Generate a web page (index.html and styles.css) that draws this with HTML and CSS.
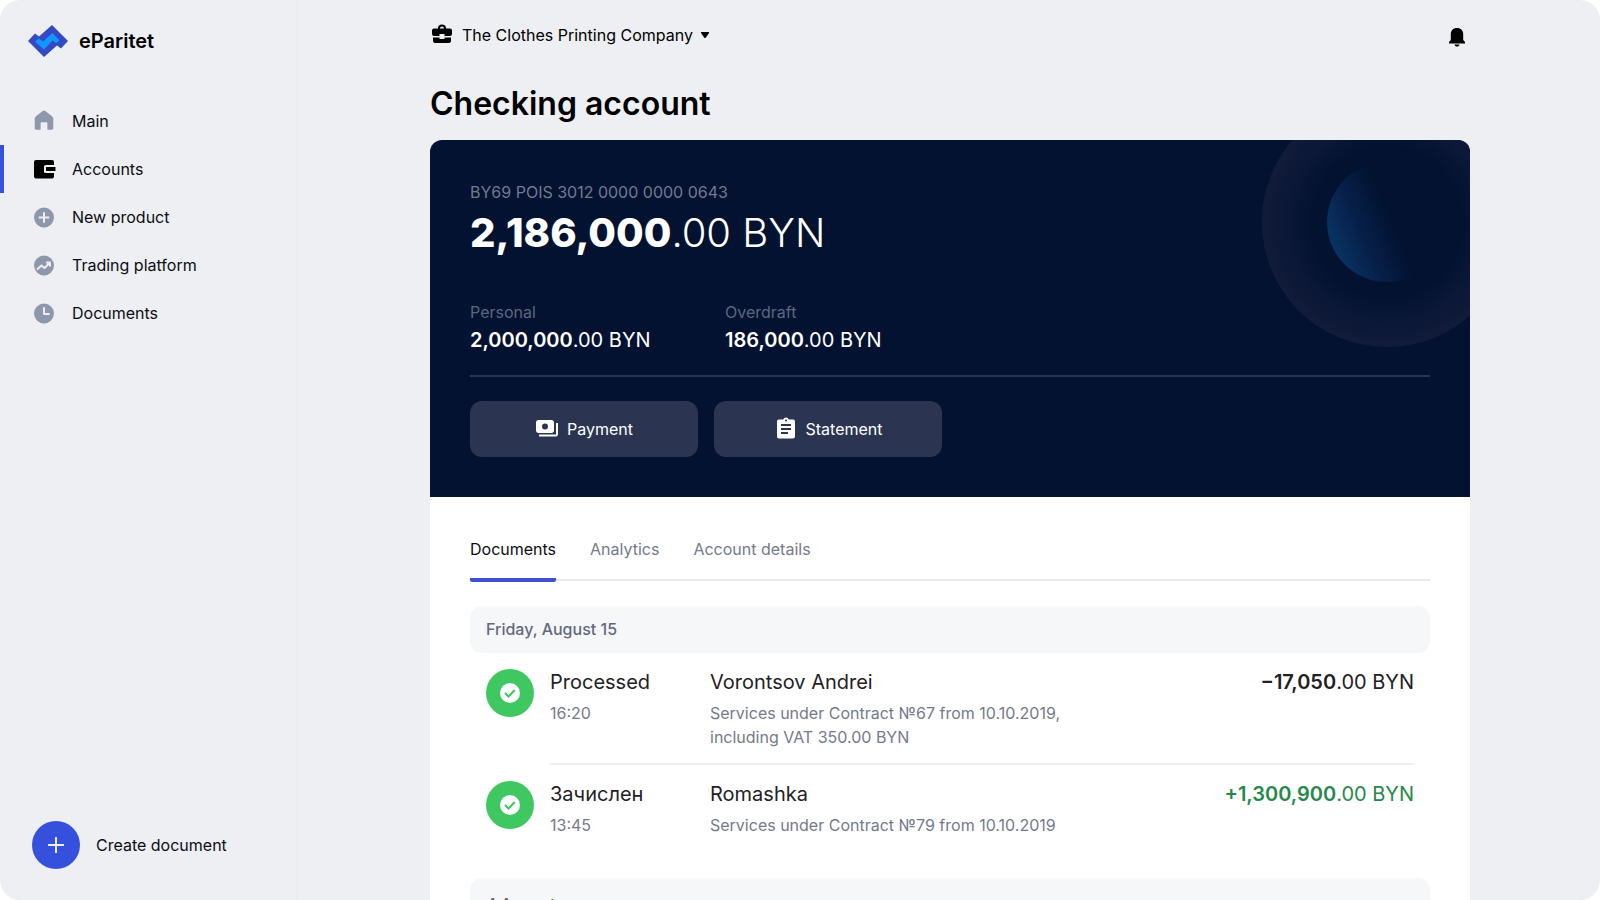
FILE: index.html
```html
<!DOCTYPE html>
<html lang="en">
<head>
<meta charset="utf-8">
<meta name="viewport" content="width=device-width, initial-scale=1">
<title>eParitet – Checking account</title>
<link rel="stylesheet" href="styles.css">
</head>
<body>
<div class="app">
  <aside class="sidebar">
    <a class="brand" href="#">
      <svg class="brand-mark" viewBox="0 0 40 32" aria-hidden="true">
        <path fill="#3449c4" d="M0 16 7 8.500l4 3L24 0l16 16-7 7.500-4-3L16 32z"/>
        <path fill="#1296ff" d="M7 16.500 11 13.500l4 3L24.500 8l7 7.500-3.500 2.500-3.500-2.500L16 24.500z"/>
      </svg>
      <span>eParitet</span>
    </a>
    <nav class="menu" aria-label="Primary">
      <a class="menu-item" href="#"><svg viewBox="0 0 24 24" aria-hidden="true"><path d="M12 1.500c.5 0 .9.2 1.300.5l7 5.500c.6.5 1 1.200 1 2V19c0 1-.7 1.700-1.700 1.700h-4.200v-6.200c0-.7-.5-1.200-1.200-1.200h-4.400c-.7 0-1.200.5-1.200 1.200v6.200H4.400c-1 0-1.700-.7-1.700-1.700V9.500c0-.8.4-1.500 1-2l7-5.500c.4-.3.800-.5 1.300-.5z"/></svg>Main</a>
      <a class="menu-item is-current" href="#" aria-current="page"><svg viewBox="0 0 24 24" aria-hidden="true"><rect x="2" y="3" width="20" height="18.500" rx="2"/><rect class="gap" x="12" y="8" width="13" height="8" rx="1.500"/><rect x="14" y="10" width="9.500" height="4" rx=".5"/></svg>Accounts</a>
      <a class="menu-item" href="#"><svg viewBox="0 0 24 24" aria-hidden="true"><circle cx="12" cy="12.500" r="10"/><path class="cut" d="M12 8v9M7.500 12.500h9"/></svg>New product</a>
      <a class="menu-item" href="#"><svg viewBox="0 0 24 24" aria-hidden="true"><circle cx="12" cy="12.500" r="10"/><path class="cut" d="M5.500 16 9.500 12.500l3 2.500 5-5M14.800 9.500h3.200v3.200"/></svg>Trading platform</a>
      <a class="menu-item" href="#"><svg viewBox="0 0 24 24" aria-hidden="true"><circle cx="12" cy="12.500" r="10"/><path class="cut" d="M12 7V13h5"/></svg>Documents</a>
    </nav>
    <button class="create" type="button">
      <span class="create-icon"><svg viewBox="0 0 24 24" aria-hidden="true"><path d="M12 4v16M4 12h16"/></svg></span>
      Create document
    </button>
  </aside>

  <div class="page">
    <header class="topbar">
      <button class="company" type="button">
        <svg class="company-icon" viewBox="0 0 24 24" aria-hidden="true"><path fill-rule="evenodd" d="M8 5.500V5c0-2 1.500-3.500 4-3.500S16 3 16 5v.5h4c1.100 0 2 .9 2 2V11c0 1.100-.9 2-2 2h-5.500v-2h-5v2H4c-1.100 0-2-.9-2-2V7.500c0-1.100.9-2 2-2zm2 0h4c0-1.300-.8-2-2-2s-2 .7-2 2z"/><path d="M3 14.500h6.500V16h5v-1.500H21V18c0 1.100-.9 2-2 2H5c-1.100 0-2-.9-2-2z"/></svg>
        The Clothes Printing Company
        <svg class="caret" viewBox="0 0 8 6" aria-hidden="true"><path d="M0 0h8v1L4.500 6h-1L0 1z"/></svg>
      </button>
      <button class="bell" type="button" aria-label="Notifications">
        <svg viewBox="0 0 16 20" aria-hidden="true"><path d="M8 0c4 0 6.200 2.500 6.200 6.500V12L16 14v1.500H0V14l1.800-2V6.500C1.800 2.500 4 0 8 0zM5.500 16.500h5c-.3 1.500-1.200 2-2.500 2s-2.200-.5-2.500-2z"/></svg>
      </button>
    </header>

    <main>
      <h1>Checking account</h1>
      <section class="account">
        <svg class="orb" viewBox="0 0 250 250" aria-hidden="true">
          <defs>
            <radialGradient id="ring"><stop offset=".6" stop-color="#111c3b" stop-opacity="0"/><stop offset=".9" stop-color="#0e1938"/><stop offset="1" stop-color="#111c3b"/></radialGradient>
            <linearGradient id="moon" x1=".02" y1=".7" x2=".54" y2=".48"><stop offset="0" stop-color="#093565"/><stop offset=".5" stop-color="#07204a"/><stop offset="1" stop-color="#021230"/></linearGradient>
          </defs>
          <circle cx="125" cy="125" r="125" fill="url(#ring)"/>
          <circle cx="125" cy="125" r="60" fill="url(#moon)"/>
        </svg>
        <p class="iban">BY69 POIS 3012 0000 0000 0643</p>
        <p class="balance"><b>2,186,000</b>.00 BYN</p>
        <dl class="parts">
          <div><dt>Personal</dt><dd><b>2,000,000</b>.00 BYN</dd></div>
          <div><dt>Overdraft</dt><dd><b>186,000</b>.00 BYN</dd></div>
        </dl>
        <div class="actions">
          <button class="action" type="button"><svg viewBox="0 0 24 24" aria-hidden="true"><path fill-rule="evenodd" d="M3.500 3h13C18 3 19 4 19 5.500v8c0 1.500-1 2.500-2.500 2.500h-13C2 16 1 15 1 13.500v-8C1 4 2 3 3.500 3zM10 6.500a3 3 0 1 0 0 6 3 3 0 0 0 0-6z"/><path d="M21 6h2v11c0 1.500-.8 2.500-2 2.500H4v-2h17z"/></svg>Payment</button>
          <button class="action" type="button"><svg viewBox="0 0 24 24" aria-hidden="true"><path fill-rule="evenodd" d="M19 2.500h-4.200a3 3 0 0 0-5.600 0H5c-1.100 0-2 .9-2 2v15c0 1.100.9 2 2 2h14c1.100 0 2-.9 2-2v-15c0-1.100-.9-2-2-2zm-7 0a1 1 0 1 1 0 2 1 1 0 0 1 0-2zM7 7h10v2H7zm0 4h10v2H7zm0 4h7v2H7z"/></svg>Statement</button>
        </div>
      </section>

      <section class="history">
        <nav class="tabs" aria-label="Account sections">
          <a class="tab is-active" href="#" aria-current="true">Documents</a>
          <a class="tab" href="#">Analytics</a>
          <a class="tab" href="#">Account details</a>
        </nav>
        <h2 class="day">Friday, August 15</h2>
        <ul class="operations">
          <li class="operation">
            <span class="status"><svg viewBox="0 0 24 24" aria-hidden="true"><circle cx="12" cy="12" r="10"/><path d="m7 12 3.500 3.500L16.800 9"/></svg></span>
            <div class="details">
              <div><p class="lead">Processed</p><p class="note">16:20</p></div>
              <div><p class="lead">Vorontsov Andrei</p><p class="note">Services under Contract №67 from 10.10.2019, <br>including VAT 350.00 BYN</p></div>
              <p class="lead"><b>−17,050</b>.00 BYN</p>
            </div>
          </li>
          <li class="operation">
            <span class="status"><svg viewBox="0 0 24 24" aria-hidden="true"><circle cx="12" cy="12" r="10"/><path d="m7 12 3.500 3.500L16.800 9"/></svg></span>
            <div class="details">
              <div><p class="lead">Зачислен</p><p class="note">13:45</p></div>
              <div><p class="lead">Romashka</p><p class="note">Services under Contract №79 from 10.10.2019</p></div>
              <p class="lead income"><b>+1,300,900</b>.00 BYN</p>
            </div>
          </li>
        </ul>
        <h2 class="day day-next">4 August</h2>
      </section>
    </main>
  </div>
</div>
</body>
</html>
```
FILE: styles.css
```css
* { box-sizing: border-box; }
body, h1, h2, p, dl, dd, ul { margin: 0; padding: 0; }
body {
  background: #fff;
  color: #0b0d12;
  font: 16px/24px Inter, "Liberation Sans", sans-serif;
}
a { color: inherit; text-decoration: none; }
button { border: 0; background: none; padding: 0; font: inherit; color: inherit; cursor: pointer; }
svg { display: block; flex: none; fill: currentColor; }

.app {
  display: flex;
  height: 100vh;
  overflow: hidden;
  border-radius: 20px;
  background: #edeff3;
}

.sidebar {
  display: flex;
  flex-direction: column;
  flex: none;
  width: 298px;
  padding: 24px 0 31px;
  border-right: 2px solid #ebecf0;
}
.brand {
  display: flex;
  align-items: center;
  gap: 11px;
  padding-left: 28px;
  height: 34px;
  font-size: 20px;
  font-weight: 600;
  color: #000;
}
.brand-mark { width: 40px; height: 32px; }
.menu { margin-top: 39px; }
.menu-item {
  display: flex;
  align-items: center;
  gap: 16px;
  height: 48px;
  padding-left: 32px;
}
.menu-item svg { width: 24px; height: 24px; color: #8f98aa; }
.menu-item.is-current {
  padding-left: 28px;
  border-left: 4px solid #3450dc;
}
.menu-item.is-current svg { color: #000; }
.gap { fill: #edeff3; }
.cut { fill: none; stroke: #edeff3; stroke-width: 2; stroke-linecap: round; stroke-linejoin: round; }
.create {
  display: flex;
  align-items: center;
  gap: 16px;
  margin-top: auto;
  padding-left: 32px;
}
.create-icon {
  display: grid;
  place-items: center;
  width: 48px;
  height: 48px;
  border-radius: 50%;
  background: #3450dc;
}
.create-icon svg { width: 24px; height: 24px; fill: none; stroke: #e9edff; stroke-width: 2; }

.page { flex: 1; padding: 0 130px 0 132px; min-width: 0; }
.topbar { display: flex; justify-content: space-between; align-items: flex-start; height: 70px; padding-top: 23px; color: #000; }
.company { display: flex; align-items: center; gap: 8px; }
.company-icon { width: 24px; height: 24px; }
.caret { width: 8px; height: 6px; }
.bell { padding: 5px 5px 0 0; }
.bell svg { width: 16px; height: 20px; }
h1 { height: 70px; font-size: 32px; line-height: 68px; font-weight: 600; color: #000; }

.account {
  position: relative;
  overflow: hidden;
  padding: 40px;
  border-radius: 12px 12px 0 0;
  background: #021230;
  color: #fff;
}
.orb { position: absolute; top: -43px; right: -42px; width: 250px; height: 250px; }
.iban { color: #717a92; }
.balance { margin-top: 4px; font-size: 40px; line-height: 50px; font-weight: 300; }
.balance b { font-weight: 800; }
.parts { display: flex; margin: 42px 0 0; padding-bottom: 19px; border-bottom: 2px solid #2b3552; }
.parts div { width: 255px; }
.parts dt { color: #5d6781; }
.parts dd { font-size: 20px; line-height: 32px; }
.parts b { font-weight: 600; }
.actions { display: flex; gap: 16px; margin-top: 24px; }
.action {
  display: flex;
  align-items: center;
  justify-content: center;
  gap: 8px;
  width: 228px;
  height: 56px;
  border-radius: 12px;
  background: #2b3552;
}
.action svg { width: 24px; height: 24px; }

.history { padding: 32px 40px 0; background: #fff; }
.tabs { display: flex; gap: 34px; height: 52px; border-bottom: 2px solid #e8e9ec; }
.tab { height: 53px; padding-top: 8px; color: #747a8a; }
.tab.is-active { color: #0b0d12; background: linear-gradient(#3f51cf, #3f51cf) bottom / 100% 4px no-repeat; border-radius: 2px; }
.day {
  margin-top: 25px;
  padding: 0 16px;
  border-radius: 12px;
  background: #f6f7f9;
  color: #62697c;
  font-size: 16px;
  line-height: 47px;
  font-weight: 500;
}
.day-next { padding-top: 3px; }
.operations { list-style: none; padding: 0 16px; }
.operation { display: flex; gap: 16px; padding-top: 16px; }
.status { display: grid; place-items: center; flex: none; width: 48px; height: 48px; border-radius: 50%; background: #3fc762; }
.status svg { width: 24px; height: 24px; color: #fff; }
.status path { fill: none; stroke: #3fc762; stroke-width: 2; }
.details { display: grid; grid-template-columns: 160px 1fr auto; flex: 1; padding-bottom: 16px; }
.operation:first-child .details { padding-bottom: 14px; border-bottom: 2px solid #eeeff1; }
.lead { font-size: 20px; line-height: 26px; color: #1f2125; }
.lead b { font-weight: 600; }
.note { margin-top: 6px; color: #747a8a; }
.lead.income { color: #25894a; }
```
